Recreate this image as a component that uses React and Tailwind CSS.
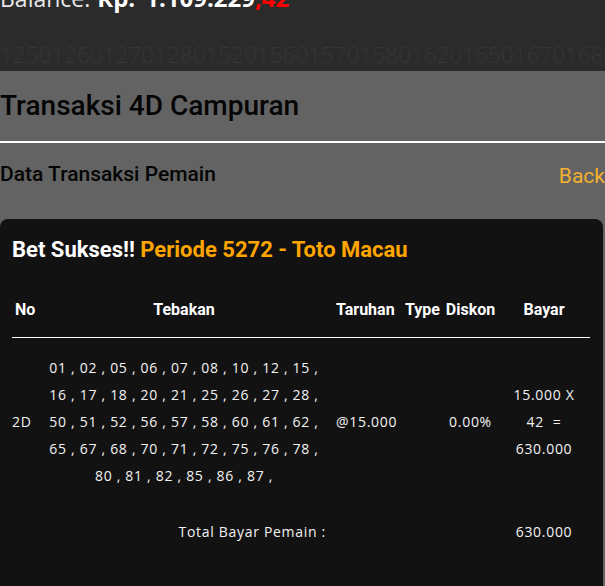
import React from 'react';

const TEBAKAN = [
  '01 , 02 , 05 , 06 , 07 , 08 , 10 , 12 , 15 ,',
  '16 , 17 , 18 , 20 , 21 , 25 , 26 , 27 , 28 ,',
  '50 , 51 , 52 , 56 , 57 , 58 , 60 , 61 , 62 ,',
  '65 , 67 , 68 , 70 , 71 , 72 , 75 , 76 , 78 ,',
  '80 , 81 , 82 , 85 , 86 , 87 ,'
];

const STRIP = '12501260127012801520156015701580162016501670168016901720175017601780';

const GRID = 'grid grid-cols-[28px_288px_74px_41px_55px_92px]';

export default function App() {
  return (
    <div className="w-[605px] h-[586px] overflow-hidden bg-[#636363] font-['Open_Sans',sans-serif]">
      {/* top bar */}
      <div className="h-[71px] bg-[#2b2b2b] overflow-hidden">
        <div className="-mt-[14px] h-[24px] text-[24px] leading-[24px] whitespace-nowrap">
          <span className="text-[23px] text-[#e8e8e8]">Balance:</span>
          <span className="ml-[7px] font-bold text-white">Rp.</span>
          <span className="ml-[10px] font-bold text-white">1.109.229</span>
          <span className="font-bold text-[#ff0000]">,42</span>
        </div>
        <div className="mt-[34px] text-[22.5px] leading-[22px] font-light whitespace-nowrap text-[#33363a]">
          {STRIP}
        </div>
      </div>

      {/* page heading */}
      <div className="font-['Roboto',sans-serif]">
        <h1 className="pt-[18px] text-[28px] leading-[34px] font-medium text-[#050505]">
          Transaksi 4D Campuran
        </h1>
        <div className="mt-[18px] h-[2px] bg-white" />
        <div className="h-[76px] pt-[17px] flex justify-between items-start">
          <div className="text-[21px] leading-[28px] font-medium text-[#050505]">Data Transaksi Pemain</div>
          <div className="pt-[2px] text-[21px] leading-[28px] text-[#f4b02f]">Back</div>
        </div>
      </div>

      {/* card */}
      <div className="mr-[2px] h-[400px] rounded-t-lg bg-[#121212] pl-[12px] pr-[13px] pt-[17px]">
        <div className="font-['Roboto',sans-serif] text-[22px] leading-[28px] font-bold">
          <span className="text-white">Bet Sukses!! </span>
          <span className="text-[#ffa500]">Periode 5272 - Toto Macau</span>
        </div>

        <div className={`${GRID} mt-[36px] h-[38px] border-b border-white font-['Roboto',sans-serif] text-[16px] leading-[20px] font-bold text-white`}>
          <div className="pl-[3px]">No</div>
          <div className="text-center">Tebakan</div>
          <div className="pl-[8px]">Taruhan</div>
          <div className="pl-[3px]">Type</div>
          <div className="text-center">Diskon</div>
          <div className="text-center">Bayar</div>
        </div>

        <div className={`${GRID} pt-[16px] text-[14px] leading-[27px] tracking-[0.7px] text-[#f2f2f2]`}>
          <div className="flex items-center">2D</div>
          <div className="text-center">
            {TEBAKAN.map((line) => (
              <div key={line} className="whitespace-pre">{line}</div>
            ))}
          </div>
          <div className="flex items-center pl-[8px]">@15.000</div>
          <div />
          <div className="flex items-center justify-center">0.00%</div>
          <div className="flex flex-col items-center justify-center">
            <div>15.000 X</div>
            <div className="whitespace-pre">42  =</div>
            <div>630.000</div>
          </div>
        </div>

        <div className={`${GRID} mt-[29px] text-[14px] leading-[27px] tracking-[0.7px] text-[#f2f2f2]`}>
          <div className="col-span-2 pr-[2px] text-right">Total Bayar Pemain :</div>
          <div />
          <div />
          <div />
          <div className="text-center">630.000</div>
        </div>
      </div>
    </div>
  );
}
